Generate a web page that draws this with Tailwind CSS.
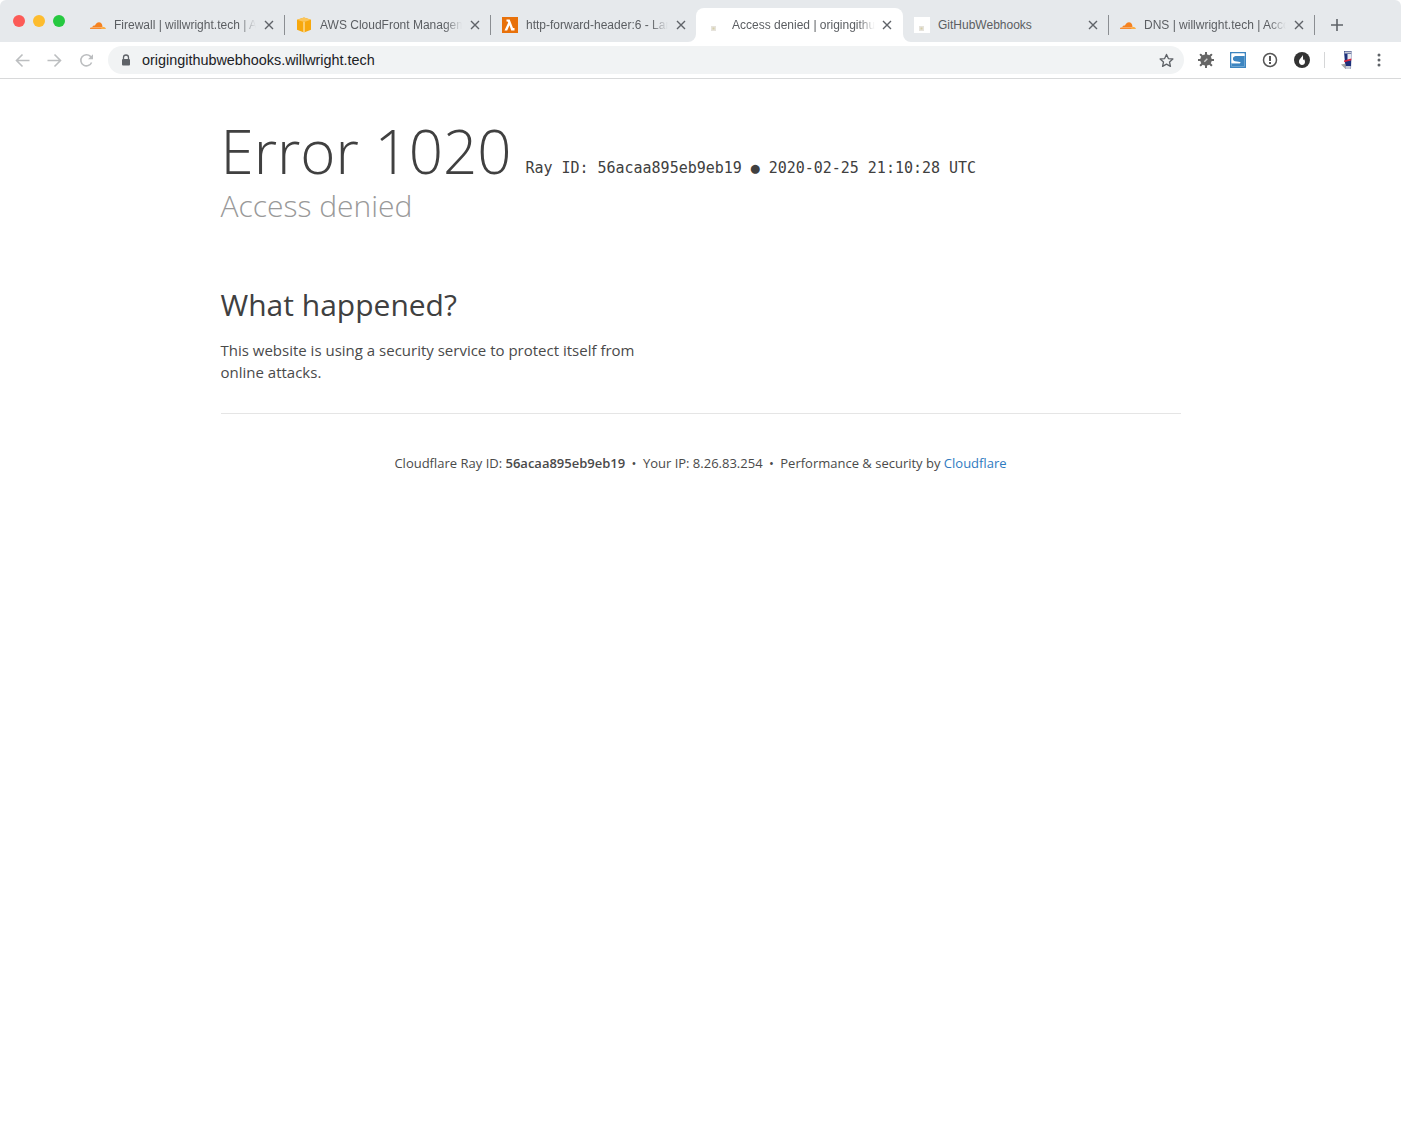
<!DOCTYPE html>
<html lang="en">
<head>
<meta charset="UTF-8">
<title>Access denied | origingithubwebhooks.willwright.tech</title>
<script src="https://cdn.jsdelivr.net/npm/@tailwindcss/browser@4"></script>
</head>
<body class="bg-white min-h-screen font-['Open_Sans',sans-serif] text-[#404040]">
<!-- browser chrome -->
<header class="h-[79px] border-b border-[#d8d9da] font-['Liberation_Sans',sans-serif]">
  <div class="h-[42px] bg-[#e6e9ec] rounded-t-[6px] flex items-start pt-[1px]">
    <div class="w-[78px] h-full flex items-center gap-[8px] pl-[13px] pb-[2px] shrink-0">
      <span class="size-3 rounded-full bg-[#fc5b57]"></span>
      <span class="size-3 rounded-full bg-[#fdbc2e]"></span>
      <span class="size-3 rounded-full bg-[#26c940]"></span>
    </div>

    <div class="w-[206px] h-[41px] flex items-center pt-[7px] pl-[12px] pr-[10px] relative">
      <svg class="w-4 h-4 shrink-0" viewBox="0 0 16 16"><path d="M0 12c.2-1.200 1.200-1.900 2.300-1.900C3 8.800 4 8.400 5 8.600 5.700 6.500 7.200 5.200 9 5.200c1.900 0 3 1.300 3.300 3.300l.1 3.500z" fill="#f58220"/><path d="M11.800 9.700c1.900-.3 3.700.6 4.200 2.300h-4.700z" fill="#fbad41"/><path d="M1 10.700h11.300" stroke="#fbd9b0" stroke-width=".6"/></svg>
      <span class="ml-[8px] w-[142px] text-[12px] text-[#5b5e62] whitespace-nowrap overflow-hidden [mask-image:linear-gradient(to_right,black_88%,transparent)]">Firewall | willwright.tech | Access</span>
      <svg class="ml-auto w-[10px] h-[10px]" viewBox="0 0 10 10"><path d="M1 1l8 8M9 1l-8 8" stroke="#5f6368" stroke-width="1.400"/></svg>
      <span class="absolute -right-px top-[14px] h-[20px] w-px bg-[#8b8e92]"></span>
    </div>

    <div class="w-[206px] h-[41px] flex items-center pt-[7px] pl-[12px] pr-[10px] relative">
      <svg class="w-4 h-4 shrink-0" viewBox="0 0 16 16"><path d="M8 .5l7 2.300v9.900L8 15.500 1 12.700V2.800z" fill="#f7a80d"/><path d="M1 2.800L8 .5l7 2.300L8 5z" fill="#fbc55a"/><path d="M8 5v10.500" fill="none" stroke="#fff3d6" stroke-width="1"/></svg>
      <span class="ml-[8px] w-[142px] text-[12px] text-[#5b5e62] whitespace-nowrap overflow-hidden [mask-image:linear-gradient(to_right,black_88%,transparent)]">AWS CloudFront Management</span>
      <svg class="ml-auto w-[10px] h-[10px]" viewBox="0 0 10 10"><path d="M1 1l8 8M9 1l-8 8" stroke="#5f6368" stroke-width="1.400"/></svg>
      <span class="absolute -right-px top-[14px] h-[20px] w-px bg-[#8b8e92]"></span>
    </div>

    <div class="w-[206px] h-[41px] flex items-center pt-[7px] pl-[12px] pr-[10px]">
      <svg class="w-4 h-4 shrink-0" viewBox="0 0 16 16"><rect width="16" height="16" fill="#e8710a"/><path d="M4.500 2.500h3.200l3.300 8.500h1.500v2.500h-3.300L7.500 8.200l-2.300 5.300H2.500L6.200 5.400 5.500 4.500h-1z" fill="#fff"/></svg>
      <span class="ml-[8px] w-[142px] text-[12px] text-[#5b5e62] whitespace-nowrap overflow-hidden [mask-image:linear-gradient(to_right,black_88%,transparent)]">http-forward-header:6 - Lambda</span>
      <svg class="ml-auto w-[10px] h-[10px]" viewBox="0 0 10 10"><path d="M1 1l8 8M9 1l-8 8" stroke="#5f6368" stroke-width="1.400"/></svg>
    </div>

    <div class="w-[207px] h-[34px] mt-[7px] flex items-center pl-[10px] pr-[11px] bg-white rounded-t-[8px] relative">
      <svg class="absolute -left-[8px] bottom-0 size-2" viewBox="0 0 8 8"><path d="M8 0v8H0a8 8 0 0 0 8-8z" fill="#fff"/></svg>
      <svg class="absolute -right-[8px] bottom-0 size-2" viewBox="0 0 8 8"><path d="M0 0v8h8a8 8 0 0 1-8-8z" fill="#fff"/></svg>
      <svg class="w-4 h-4 shrink-0" viewBox="0 0 16 16"><rect x="5" y="9" width="5" height="5" fill="#e6e3dc"/><rect x="6.500" y="10.500" width="2" height="2" fill="#d6cfa8"/></svg>
      <span class="ml-[10px] w-[143px] text-[12px] text-[#5b5e62] whitespace-nowrap overflow-hidden [mask-image:linear-gradient(to_right,black_88%,transparent)]">Access denied | origingithubwebhooks</span>
      <svg class="ml-auto w-[10px] h-[10px]" viewBox="0 0 10 10"><path d="M1 1l8 8M9 1l-8 8" stroke="#5f6368" stroke-width="1.400"/></svg>
    </div>

    <div class="w-[205px] h-[41px] flex items-center pt-[7px] pl-[11px] pr-[10px] relative">
      <svg class="w-4 h-4 shrink-0" viewBox="0 0 16 16"><rect width="16" height="16" fill="#fff"/><rect x="5" y="9" width="5" height="5" fill="#e6e3dc"/><rect x="6.500" y="10.500" width="2" height="2" fill="#d6cfa8"/></svg>
      <span class="ml-[8px] text-[12px] text-[#5b5e62] whitespace-nowrap">GitHubWebhooks</span>
      <svg class="ml-auto w-[10px] h-[10px]" viewBox="0 0 10 10"><path d="M1 1l8 8M9 1l-8 8" stroke="#5f6368" stroke-width="1.400"/></svg>
      <span class="absolute -right-px top-[14px] h-[20px] w-px bg-[#8b8e92]"></span>
    </div>

    <div class="w-[206px] h-[41px] flex items-center pt-[7px] pl-[12px] pr-[10px] relative">
      <svg class="w-4 h-4 shrink-0" viewBox="0 0 16 16"><path d="M0 12c.2-1.200 1.200-1.900 2.300-1.900C3 8.800 4 8.400 5 8.600 5.700 6.500 7.200 5.200 9 5.200c1.900 0 3 1.300 3.300 3.300l.1 3.500z" fill="#f58220"/><path d="M11.800 9.700c1.900-.3 3.700.6 4.200 2.300h-4.700z" fill="#fbad41"/><path d="M1 10.700h11.300" stroke="#fbd9b0" stroke-width=".6"/></svg>
      <span class="ml-[8px] w-[142px] text-[12px] text-[#5b5e62] whitespace-nowrap overflow-hidden [mask-image:linear-gradient(to_right,black_88%,transparent)]">DNS | willwright.tech | Account</span>
      <svg class="ml-auto w-[10px] h-[10px]" viewBox="0 0 10 10"><path d="M1 1l8 8M9 1l-8 8" stroke="#5f6368" stroke-width="1.400"/></svg>
      <span class="absolute -right-px top-[14px] h-[20px] w-px bg-[#8b8e92]"></span>
    </div>

    <div class="h-[41px] flex items-center pt-[7px] pl-[17px]">
      <svg class="w-[12px] h-[12px]" viewBox="0 0 12 12"><path d="M6 0v12M0 6h12" stroke="#5f6368" stroke-width="1.600"/></svg>
    </div>
  </div>

  <div class="h-[36px] flex items-center bg-white">
    <div class="w-[108px] flex items-center gap-[17px] pl-[15px] shrink-0">
      <svg class="size-[15px]" viewBox="0 0 15 15"><path d="M14.500 7.500H2M7.500 1.500l-6 6 6 6" fill="none" stroke="#bcbec0" stroke-width="1.600"/></svg>
      <svg class="size-[15px]" viewBox="0 0 15 15"><path d="M.5 7.500H13M7.500 1.500l6 6-6 6" fill="none" stroke="#bcbec0" stroke-width="1.600"/></svg>
      <svg class="size-[15px]" viewBox="0 0 15 15"><path d="M12.600 9.500A5.600 5.600 0 1 1 11.500 3.400L13.500 5.300" fill="none" stroke="#bcbec0" stroke-width="1.600"/><path d="M14 1.200v5h-5z" fill="#bcbec0"/></svg>
    </div>
    <div class="w-[1076px] h-[28px] rounded-full bg-[#f1f3f4] flex items-center pl-[13px] pr-[10px] shrink-0">
      <svg class="w-[10px] h-[12px]" viewBox="0 0 10 12"><path d="M2.500 5V3.500a2.500 2.500 0 0 1 5 0V5" fill="none" stroke="#5f6368" stroke-width="1.300"/><rect x="1" y="5" width="8" height="6.500" rx="1" fill="#5f6368"/></svg>
      <span class="ml-[11px] pt-[1px] text-[14.4px] text-[#202124]">origingithubwebhooks.willwright.tech</span>
      <svg class="ml-auto size-[15px]" viewBox="0 0 16 16"><path d="M8 1.500l2 4.400 4.800.5-3.600 3.200 1 4.700L8 11.900l-4.200 2.400 1-4.700L1.200 6.400 6 5.900z" fill="none" stroke="#5f6368" stroke-width="1.400" stroke-linejoin="round"/></svg>
    </div>
    <div class="flex items-center flex-1 pl-[14px]">
      <svg class="size-4 shrink-0" viewBox="0 0 16 16"><circle cx="8" cy="8" r="5.800" fill="#666"/><path d="M8 .5v15M.5 8h15M2.700 2.700l10.600 10.600M13.300 2.700L2.700 13.300" stroke="#666" stroke-width="2" stroke-linecap="round"/><path d="M5.800 9.200l3-3 1 1-3 3z" fill="#cfcfcf"/></svg>
      <svg class="size-4 shrink-0 ml-[16px]" viewBox="0 0 16 16"><rect width="16" height="16" fill="#3d85c0"/><rect x="1.500" y="1.500" width="13" height="13" fill="#fff"/><path d="M1.500 14.500v-3.300h8.300c.8 0 .8-1 0-1.100L5 9.500C2 9 2.200 4 5.500 4h9v10.500z" fill="#3d85c0"/><path d="M1.500 11.200h8.300c.8 0 .8-1 0-1.100L5 9.500C2 9 2.200 4 5.500 4h9V1.500h-13z" fill="#fff"/></svg>
      <svg class="size-4 shrink-0 ml-[16px]" viewBox="0 0 16 16"><circle cx="8" cy="8" r="6.500" fill="none" stroke="#555" stroke-width="1.500"/><rect x="7" y="4" width="2" height="5" fill="#555"/><rect x="7" y="10" width="2" height="2" fill="#555"/></svg>
      <svg class="size-4 shrink-0 ml-[16px]" viewBox="0 0 16 16"><circle cx="8" cy="8" r="8" fill="#333"/><path d="M8.500 2.800c.5 2-3.500 3.800-3.500 7 0 1.900 1.400 3.200 3 3.200s3-1.300 3-3.100c0-1.300-.7-2.200-1-3-.3.700-.6 1-1 1.100.3-2-.1-4.500-.5-5.200z" fill="#fff"/></svg>
      <span class="w-px h-[16px] bg-[#d5d6d7] ml-[14px]"></span>
      <svg class="w-4 h-5 shrink-0 ml-[13px]" viewBox="0 0 16 20"><path d="M6 1h7.500l-.5 18H7.500z" fill="#1c2f7a"/><path d="M6.500 1.500h7v2h-7z" fill="#c9ccd6"/><path d="M9.500 4h3.800l-.2 6-3.600 1z" fill="#e6e8ef"/><path d="M6 10.500l7.300-2v1.800l-7 2z" fill="#d8203a"/><path d="M7.500 16h5.300v3H7.500z" fill="#c9ccd6"/><path d="M3 14.500l4.500-1V19z" fill="#a5a5a5"/></svg>
      <svg class="w-[4px] h-[14px] shrink-0 ml-[23px]" viewBox="0 0 4 14"><circle cx="2" cy="2" r="1.500" fill="#5f6368"/><circle cx="2" cy="7" r="1.500" fill="#5f6368"/><circle cx="2" cy="12" r="1.500" fill="#5f6368"/></svg>
    </div>
  </div>
</header>

<!-- page -->
<main class="max-w-[960px] mx-auto">
  <div class="pt-[36px]">
    <h1 class="text-[60px] leading-[72px] font-light text-[#404040] whitespace-nowrap">Error 1020<span class="ml-[14px] text-[15px] tracking-[-0.02px] leading-none font-normal align-[1px] font-['DejaVu_Sans_Mono',monospace]">Ray ID: 56acaa895eb9eb19 ● 2020-02-25 21:10:28 UTC</span></h1>
    <h2 class="text-[30px] leading-[37px] font-light text-[#999]">Access denied</h2>
  </div>
  <section class="mt-[58px]">
    <h2 class="text-[30px] leading-[45px] text-[#404040]">What happened?</h2>
    <p class="mt-[12px] w-[450px] text-[15px] leading-[22px] text-[#4a4a4a]">This website is using a security service to protect itself from online attacks.</p>
  </section>
  <footer class="mt-[30px] border-t border-[#e5e5e5] pt-[39px] text-center text-[13px] leading-[20px] text-[#4a4a4a]">
    <span>Cloudflare Ray ID: <strong class="font-semibold">56acaa895eb9eb19</strong></span>
    <span class="mx-[3px]">•</span>
    <span>Your IP: 8.26.83.254</span>
    <span class="mx-[3px]">•</span>
    <span>Performance &amp; security by <a href="#" class="text-[#2f7bbf]">Cloudflare</a></span>
  </footer>
</main>
</body>
</html>
